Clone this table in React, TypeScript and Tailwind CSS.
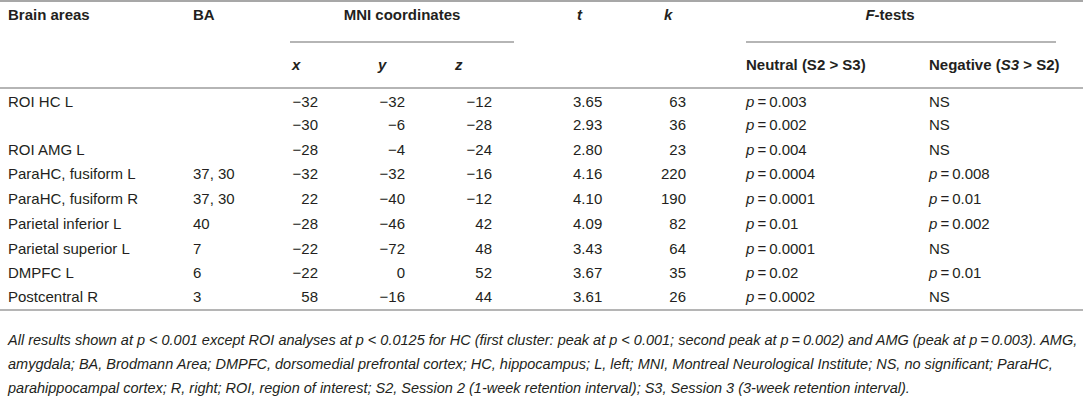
import React from "react";

const P = () => <span className="italic">p</span>;
const pv = (v: string) => (
  <>
    <P />
    {"\u2009=\u2009"}
    {v}
  </>
);

type Row = {
  area: string;
  ba: string;
  x: string;
  y: string;
  z: string;
  t: string;
  k: string;
  neu: React.ReactNode;
  neg: React.ReactNode;
};

const rows: Row[] = [
  { area: "ROI HC L", ba: "", x: "\u221232", y: "\u221232", z: "\u221212", t: "3.65", k: "63", neu: pv("0.003"), neg: "NS" },
  { area: "", ba: "", x: "\u221230", y: "\u22126", z: "\u221228", t: "2.93", k: "36", neu: pv("0.002"), neg: "NS" },
  { area: "ROI AMG L", ba: "", x: "\u221228", y: "\u22124", z: "\u221224", t: "2.80", k: "23", neu: pv("0.004"), neg: "NS" },
  { area: "ParaHC, fusiform L", ba: "37, 30", x: "\u221232", y: "\u221232", z: "\u221216", t: "4.16", k: "220", neu: pv("0.0004"), neg: pv("0.008") },
  { area: "ParaHC, fusiform R", ba: "37, 30", x: "22", y: "\u221240", z: "\u221212", t: "4.10", k: "190", neu: pv("0.0001"), neg: pv("0.01") },
  { area: "Parietal inferior L", ba: "40", x: "\u221228", y: "\u221246", z: "42", t: "4.09", k: "82", neu: pv("0.01"), neg: pv("0.002") },
  { area: "Parietal superior L", ba: "7", x: "\u221222", y: "\u221272", z: "48", t: "3.43", k: "64", neu: pv("0.0001"), neg: "NS" },
  { area: "DMPFC L", ba: "6", x: "\u221222", y: "0", z: "52", t: "3.67", k: "35", neu: pv("0.02"), neg: pv("0.01") },
  { area: "Postcentral R", ba: "3", x: "58", y: "\u221216", z: "44", t: "3.61", k: "26", neu: pv("0.0002"), neg: "NS" },
];

export default function App() {
  return (
    <div
      className="w-[1083px] h-[400px] bg-white text-[#231f20] overflow-hidden"
      style={{ fontFamily: '"Liberation Sans", Arial, sans-serif' }}
    >
      <table className="table-fixed border-collapse w-[1083px] text-[15px]">
        <colgroup>
          <col className="w-[185px]" />
          <col className="w-[99px]" />
          <col className="w-[86px]" />
          <col className="w-[77px]" />
          <col className="w-[122px]" />
          <col className="w-[87px]" />
          <col className="w-[82px]" />
          <col className="w-[183px]" />
          <col className="w-[162px]" />
        </colgroup>
        <thead>
          <tr className="h-[42px] border-t-2 border-[#a7a7a7] align-top">
            <th className="text-left font-bold pl-[8px] pt-[2px] text-[15px]">Brain areas</th>
            <th className="text-left font-bold pl-[8px] pt-[2px] text-[15px]">BA</th>
            <th colSpan={3} className="font-bold pt-[2px] text-[15px]">
              <div className="ml-[6px] w-[224px] h-[39px] border-b-2 border-[#b5b5b5] text-center">
                MNI coordinates
              </div>
            </th>
            <th className="text-left font-bold italic pl-[8px] pt-[2px] text-[15px]">t</th>
            <th className="text-left font-bold italic pl-[8px] pt-[2px] text-[15px]">k</th>
            <th colSpan={2} className="font-bold pt-[2px] text-[15px]">
              <div className="ml-[8px] w-[310px] h-[39px] border-b-2 border-[#b5b5b5] text-center pr-[22px]">
                <span className="italic">F</span>-tests
              </div>
            </th>
          </tr>
          <tr className="h-[45px] border-b-2 border-[#b5b5b5] text-[15px]">
            <th />
            <th />
            <th className="text-left font-bold italic pl-[8px]">x</th>
            <th className="text-left font-bold italic pl-[8px]">y</th>
            <th className="text-left font-bold italic pl-[8px]">z</th>
            <th />
            <th />
            <th className="text-left font-bold pl-[8px] whitespace-nowrap">Neutral (S2 &gt; S3)</th>
            <th className="text-left font-bold pl-[8px] whitespace-nowrap">
              Negative (<span className="italic">S3</span> &gt; S2)
            </th>
          </tr>
        </thead>
        <tbody>
          {rows.map((r, i) => (
            <tr
              key={i}
              className={
                i === 0
                  ? "h-[25px] align-bottom"
                  : i === rows.length - 1
                  ? "h-[24px] align-top border-b-2 border-[#b5b5b5]"
                  : "h-[24.7px]"
              }
            >
              <td className="pl-[8px] whitespace-nowrap">{r.area}</td>
              <td className="pl-[8px]">{r.ba}</td>
              <td className="text-right pr-[52px]">{r.x}</td>
              <td className="text-right pr-[42px]">{r.y}</td>
              <td className="text-right pr-[77px]">{r.z}</td>
              <td className="pl-[4px]">{r.t}</td>
              <td className="text-right pr-[52px]">{r.k}</td>
              <td className="pl-[8px] whitespace-nowrap">{r.neu}</td>
              <td className="pl-[8px] whitespace-nowrap">{r.neg}</td>
            </tr>
          ))}
        </tbody>
      </table>
      <div className="pl-[8px] pt-[17px] italic text-[14.5px] leading-[24px] whitespace-nowrap">
        All results shown at p &lt; 0.001 except ROI analyses at p &lt; 0.0125 for HC (first cluster: peak at p &lt; 0.001; second peak at p{"\u2009=\u2009"}0.002) and AMG (peak at p{"\u2009=\u2009"}0.003). AMG,
        <br />
        amygdala; BA, Brodmann Area; DMPFC, dorsomedial prefrontal cortex; HC, hippocampus; L, left; MNI, Montreal Neurological Institute; NS, no significant; ParaHC,
        <br />
        parahippocampal cortex; R, right; ROI, region of interest; S2, Session 2 (1-week retention interval); S3, Session 3 (3-week retention interval).
      </div>
    </div>
  );
}
